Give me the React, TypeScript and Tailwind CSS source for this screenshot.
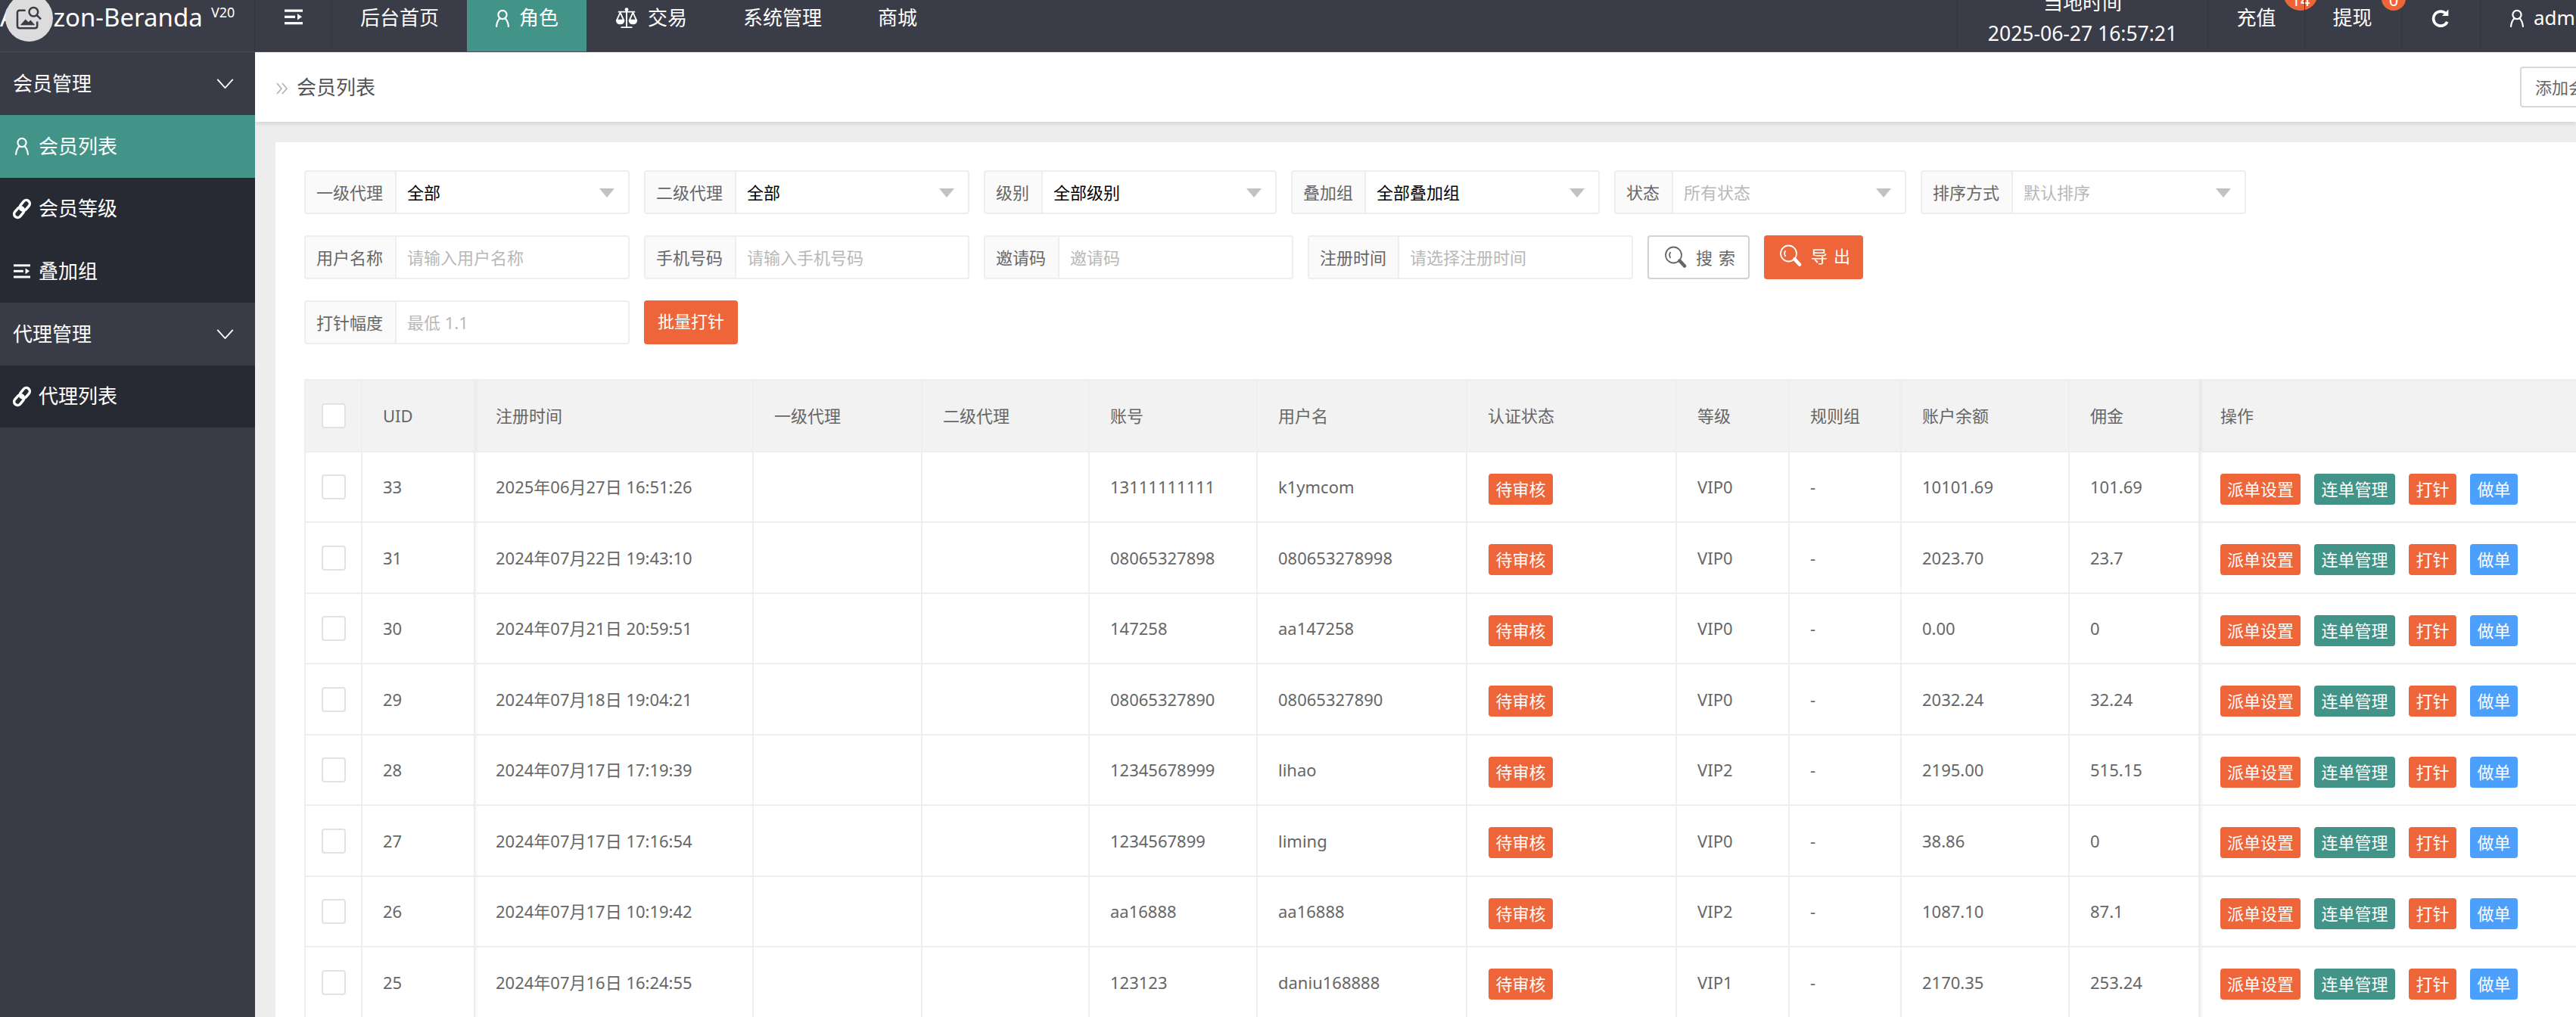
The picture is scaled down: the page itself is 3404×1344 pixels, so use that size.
import type { ReactNode } from "react";

const rows = [
  ["33", "2025年06月27日 16:51:26", "13111111111", "k1ymcom", "VIP0", "10101.69", "101.69"],
  ["31", "2024年07月22日 19:43:10", "08065327898", "080653278998", "VIP0", "2023.70", "23.7"],
  ["30", "2024年07月21日 20:59:51", "147258", "aa147258", "VIP0", "0.00", "0"],
  ["29", "2024年07月18日 19:04:21", "08065327890", "08065327890", "VIP0", "2032.24", "32.24"],
  ["28", "2024年07月17日 17:19:39", "12345678999", "lihao", "VIP2", "2195.00", "515.15"],
  ["27", "2024年07月17日 17:16:54", "1234567899", "liming", "VIP0", "38.86", "0"],
  ["26", "2024年07月17日 10:19:42", "aa16888", "aa16888", "VIP2", "1087.10", "87.1"],
  ["25", "2024年07月16日 16:24:55", "123123", "daniu168888", "VIP1", "2170.35", "253.24"],
];

const headers = ["UID", "注册时间", "一级代理", "二级代理", "账号", "用户名", "认证状态", "等级", "规则组", "账户余额", "佣金", "操作"];
const widths = [75, 149, 368, 223, 221, 222, 277, 277, 149, 148, 222, 172, 600];

function PersonIcon({ className }: { className?: string }) {
  return (
    <svg viewBox="0 0 20 24" fill="none" stroke="currentColor" strokeWidth="2.2" className={className}>
      <circle cx="10" cy="7.5" r="5.6" />
      <path d="M6.6 12 C4 14.5 2.6 18 2 23 M13.4 12 C16 14.5 17.4 18 18 23" strokeLinecap="round" />
    </svg>
  );
}

function LinkIcon({ className }: { className?: string }) {
  return (
    <svg viewBox="0 0 24 24" fill="none" stroke="currentColor" strokeWidth="3.2" className={className}>
      <rect x="11" y="0.5" width="8.5" height="14" rx="4.2" transform="rotate(40 15 8)" />
      <rect x="4.5" y="9.5" width="8.5" height="14" rx="4.2" transform="rotate(40 9 16)" />
    </svg>
  );
}

function ShrinkIcon({ className }: { className?: string }) {
  return (
    <svg viewBox="0 0 24 20" fill="currentColor" className={className}>
      <rect x="0" y="0" width="24" height="3.2" />
      <rect x="0" y="8.2" width="14" height="3.2" />
      <path d="M17 5.6 L23 9.8 L17 14 Z" />
      <rect x="0" y="16.6" width="24" height="3.2" />
    </svg>
  );
}

function ScaleIcon({ className }: { className?: string }) {
  return (
    <svg viewBox="0 0 32 30" fill="none" stroke="currentColor" strokeWidth="2" className={className}>
      <path d="M16 3 V28 M8 28 H24 M4 6 H28" />
      <path d="M7 7 L2 18 H12 Z M25 7 L20 18 H30 Z" strokeLinejoin="round" />
      <path d="M2 19 C3 24 11 24 12 19 Z M20 19 C21 24 29 24 30 19 Z" fill="currentColor" />
      <circle cx="16" cy="3" r="1.6" fill="currentColor" />
    </svg>
  );
}

function RefreshIcon({ className }: { className?: string }) {
  return (
    <svg viewBox="0 0 24 24" fill="none" stroke="currentColor" strokeWidth="3.6" className={className}>
      <path d="M19 7.5 A9.2 9.2 0 1 0 20 17" />
      <path d="M21.5 1.5 V9.5 H13.5 Z" fill="currentColor" stroke="none" />
    </svg>
  );
}

function SearchIcon({ className }: { className?: string }) {
  return (
    <svg viewBox="0 0 30 30" fill="none" stroke="currentColor" strokeWidth="1.8" className={className}>
      <circle cx="12.5" cy="12" r="10.5" />
      <path d="M8.5 8 C6.8 10.5 6.8 13.5 8.5 16" />
      <path d="M20.5 19.5 L27 26.5" strokeWidth="4.6" strokeLinecap="round" />
    </svg>
  );
}

function Caret() {
  return <span className="absolute right-[18px] top-[22px] h-0 w-0 border-x-[10px] border-t-[12px] border-x-transparent border-t-[#c2c2c2]" />;
}

function Field({
  label,
  labelWidth,
  width,
  value,
  placeholder,
  select,
}: {
  label: string;
  labelWidth: number;
  width: number;
  value?: string;
  placeholder?: string;
  select?: boolean;
}) {
  return (
    <div
      className="relative flex h-[58px] shrink-0 overflow-hidden rounded-[4px] border-2 border-[#eeeeee] bg-white text-[22px]"
      style={{ width }}
    >
      <div
        className="flex shrink-0 items-center border-r-2 border-[#eeeeee] bg-[#fafafa] pl-[14px] text-[#666666]"
        style={{ width: labelWidth }}
      >
        {label}
      </div>
      {value ? (
        <div className="flex items-center pl-[14px] text-black">{value}</div>
      ) : (
        <div className="flex items-center pl-[14px] text-[#b8b8b8]">{placeholder}</div>
      )}
      {select && <Caret />}
    </div>
  );
}

function SideGroup({ label }: { label: string }) {
  return (
    <div className="flex h-[83px] items-center justify-between bg-[#393b47] pl-[17px] pr-[28px] text-[26px] text-white">
      <span>{label}</span>
      <svg viewBox="0 0 24 14" fill="none" stroke="currentColor" strokeWidth="2" className="h-[13px] w-[23px]">
        <path d="M1 1 L12 13 L23 1" />
      </svg>
    </div>
  );
}

function SideItem({ label, icon, active }: { label: string; icon: ReactNode; active?: boolean }) {
  return (
    <div className={`flex h-[82.5px] items-center gap-[11px] pl-[18px] text-[26px] text-white ${active ? "bg-[#429488]" : "bg-[#282a33]"}`}>
      <span className="flex w-[22px] justify-center">{icon}</span>
      <span>{label}</span>
    </div>
  );
}

function TopItem({ label, icon, active }: { label: string; icon?: ReactNode; active?: boolean }) {
  return (
    <div className={`flex h-[68px] items-start gap-[12px] px-[37px] pt-[5px] leading-[36px] ${active ? "bg-[#429488]" : ""}`}>
      {icon}
      <span>{label}</span>
    </div>
  );
}

function ActionBtn({ label, color, width }: { label: string; color: string; width: number }) {
  return (
    <span className={`flex h-[41px] items-center justify-center rounded-[4px] text-[22px] text-white ${color}`} style={{ width }}>
      {label}
    </span>
  );
}

function CheckBox() {
  return <div className="mx-auto h-[33px] w-[32px] rounded-[4px] border-2 border-[#e2e2e2] bg-white" />;
}

export default function App() {
  return (
    <div className="relative flex h-[1344px] w-[3404px] flex-col overflow-hidden bg-[#ededed] font-['Noto_Sans','Noto_Sans_CJK_SC',sans-serif]">
      <header className="flex h-[69px] shrink-0 border-b border-[#4d4f5a] bg-[#3a3c48] text-[26px] text-white">
        <div className="relative w-[337px] shrink-0 overflow-hidden border-r border-[#33353f] leading-[46px]">
          <span className="absolute left-0 top-0 whitespace-nowrap text-[33px]">Amazon-Beranda</span>
          <span className="absolute left-[279px] top-[-7px] text-[18px]">V20</span>
        </div>
        <div className="flex h-[68px] w-[102px] shrink-0 items-start justify-center border-r border-[#33353f] pt-[12px]">
          <ShrinkIcon className="h-[21px] w-[24px]" />
        </div>
        <TopItem label="后台首页" />
        <TopItem active label="角色" icon={<PersonIcon className="mt-[6px] h-[26px] w-[20px]" />} />
        <TopItem label="交易" icon={<ScaleIcon className="mt-[5px] h-[28px] w-[32px]" />} />
        <TopItem label="系统管理" />
        <TopItem label="商城" />
        <div className="ml-auto flex h-[68px] w-[331px] shrink-0 flex-col items-center border-l border-[#33353f] text-center">
          <div className="mt-[-16px] leading-[38px]">当地时间</div>
          <div className="mt-[3px] text-[26.5px] leading-[38px]">2025-06-27 16:57:21</div>
        </div>
        <div className="relative flex h-[68px] w-[128px] shrink-0 justify-center border-l border-[#33353f] pt-[5px] leading-[36px]">
          充值
          <span className="absolute left-[99px] top-[-32px] flex h-[46px] w-[46px] items-end justify-center rounded-full bg-[#ee6539] text-[22px] leading-[30px]">14</span>
        </div>
        <div className="relative flex h-[68px] w-[128px] shrink-0 justify-center border-l border-[#33353f] pr-[2px] pt-[5px] leading-[36px]">
          提现
          <span className="absolute left-[101px] top-[-18px] flex h-[32px] w-[32px] items-end justify-center rounded-full bg-[#ee6539] text-[22px] leading-[30px]">0</span>
        </div>
        <div className="flex h-[68px] w-[104px] shrink-0 justify-center border-l border-[#33353f] pt-[11px]">
          <RefreshIcon className="h-[25px] w-[25px]" />
        </div>
        <div className="flex h-[68px] w-[127px] shrink-0 items-start gap-[12px] overflow-hidden border-l border-[#33353f] pl-[38px] pt-[5px] leading-[36px]">
          <PersonIcon className="mt-[6px] h-[26px] w-[20px] shrink-0" />
          <span>admin</span>
        </div>
      </header>

      {/* grey circle of the browser's image search button, over the logo */}
      <div className="absolute left-[7px] top-[-8px] flex h-[63px] w-[63px] items-center justify-center rounded-full bg-[#dcdcdc] pt-[2px]">
        <svg viewBox="0 0 36 36" fill="none" className="h-[35px] w-[35px] text-[#3a3c48]">
          <path d="M13 7 H5 Q2 7 2 10 V28 Q2 31 5 31 H26 Q29 31 29 28 V22" stroke="currentColor" strokeWidth="2.6" />
          <path d="M6 27 L13 19 L17 23 L20 20 L26 27 Z" fill="currentColor" />
          <circle cx="24" cy="9" r="6" stroke="currentColor" strokeWidth="2.6" />
          <path d="M28.5 13.5 L34 19" stroke="currentColor" strokeWidth="2.6" />
        </svg>
      </div>

      <div className="flex min-h-0 flex-1">
        <aside className="w-[337px] shrink-0 bg-[#393b47]">
          <SideGroup label="会员管理" />
          <SideItem active label="会员列表" icon={<PersonIcon className="h-[26px] w-[20px]" />} />
          <SideItem label="会员等级" icon={<LinkIcon className="h-[28px] w-[26px] shrink-0" />} />
          <SideItem label="叠加组" icon={<ShrinkIcon className="h-[21px] w-[24px]" />} />
          <SideGroup label="代理管理" />
          <SideItem label="代理列表" icon={<LinkIcon className="h-[28px] w-[26px] shrink-0" />} />
        </aside>

        <main className="min-w-0 flex-1 overflow-hidden">
          <div className="flex h-[92px] items-center justify-between bg-white pl-[28px] shadow-[0_2px_6px_rgba(0,0,0,0.12)]">
            <div className="flex items-center gap-[11px]">
              <svg viewBox="0 0 16 18" fill="none" stroke="#b0b0b0" strokeWidth="1.6" className="mt-[4px] h-[18px] w-[16px]">
                <path d="M1 2 L7 9 L1 16 M8 2 L14 9 L8 16" />
              </svg>
              <span className="text-[26px] text-[#555555]">会员列表</span>
            </div>
            <div className="flex h-[54px] w-[74px] items-center overflow-hidden whitespace-nowrap rounded-l-[4px] border-2 border-r-0 border-[#d9d9d9] pl-[18px] text-[22px] text-[#666666]">
              添加会员
            </div>
          </div>

          <div className="ml-[27px] mt-[27px] bg-white pl-[38px] pt-[37px]">
            <div className="flex gap-[19px]">
              <Field select label="一级代理" labelWidth={120} width={430} value="全部" />
              <Field select label="二级代理" labelWidth={120} width={430} value="全部" />
              <Field select label="级别" labelWidth={76} width={387} value="全部级别" />
              <Field select label="叠加组" labelWidth={97} width={408} value="全部叠加组" />
              <Field select label="状态" labelWidth={76} width={386} placeholder="所有状态" />
              <Field select label="排序方式" labelWidth={120} width={430} placeholder="默认排序" />
            </div>

            <div className="mt-[28px] flex gap-[19px]">
              <Field label="用户名称" labelWidth={120} width={430} placeholder="请输入用户名称" />
              <Field label="手机号码" labelWidth={120} width={430} placeholder="请输入手机号码" />
              <Field label="邀请码" labelWidth={98} width={409} placeholder="邀请码" />
              <Field label="注册时间" labelWidth={119} width={430} placeholder="请选择注册时间" />
              <button className="flex h-[58px] w-[135px] items-center gap-[12px] rounded-[4px] border-2 border-[#d2d2d2] bg-white pl-[20px] text-[22px] text-[#666666]">
                <SearchIcon className="h-[30px] w-[30px]" />
                <span className="tracking-[8px]">搜索</span>
              </button>
              <button className="flex h-[58px] w-[131px] items-center gap-[12px] rounded-[4px] bg-[#ee6539] pb-[4px] pl-[20px] text-[22px] text-white">
                <SearchIcon className="h-[30px] w-[30px]" />
                <span className="tracking-[8px]">导出</span>
              </button>
            </div>

            <div className="mt-[28px] flex gap-[19px]">
              <Field label="打针幅度" labelWidth={120} width={430} placeholder="最低 1.1" />
              <button className="h-[58px] w-[124px] rounded-[4px] bg-[#ee6539] pb-[4px] text-[22px] text-white">批量打针</button>
            </div>

            <table className="mt-[46px] w-[3103px] table-fixed border-collapse text-[22px] text-[#666666]">
              <colgroup>
                {widths.map((w, i) => (
                  <col key={i} style={{ width: w }} />
                ))}
              </colgroup>
              <thead>
                <tr className="h-[95px] bg-[#f2f2f2]">
                  <th className="border-2 border-[#eeeeee]">
                    <CheckBox />
                  </th>
                  {headers.map((h, i) => (
                    <th
                      key={h}
                      className={`border-2 border-[#eeeeee] pl-[27px] text-left font-normal ${i === 1 ? "shadow-[inset_4px_0_4px_-3px_rgba(0,0,0,0.06)]" : ""} ${i === 11 ? "shadow-[inset_4px_0_4px_-3px_rgba(0,0,0,0.1)]" : ""}`}
                      colSpan={i === 11 ? 2 : 1}
                    >
                      {h}
                    </th>
                  ))}
                </tr>
              </thead>
              <tbody>
                {rows.map((r, idx) => (
                  <tr key={r[0]} className={idx % 2 === 0 ? "h-[93px]" : "h-[94px]"}>
                    <td className="border-2 border-[#eeeeee]">
                      <CheckBox />
                    </td>
                    <td className="border-2 border-[#eeeeee] pl-[27px]">{r[0]}</td>
                    <td className="border-2 border-[#eeeeee] pl-[27px] shadow-[inset_4px_0_4px_-3px_rgba(0,0,0,0.06)]">{r[1]}</td>
                    <td className="border-2 border-[#eeeeee]" />
                    <td className="border-2 border-[#eeeeee]" />
                    <td className="border-2 border-[#eeeeee] pl-[27px]">{r[2]}</td>
                    <td className="border-2 border-[#eeeeee] pl-[27px]">{r[3]}</td>
                    <td className="border-2 border-[#eeeeee] pl-[28px]">
                      <span className="mt-[5px] flex h-[41px] w-[85px] items-center justify-center rounded-[4px] bg-[#ee6539] text-[22px] text-white">待审核</span>
                    </td>
                    <td className="border-2 border-[#eeeeee] pl-[27px]">{r[4]}</td>
                    <td className="border-2 border-[#eeeeee] pl-[27px]">-</td>
                    <td className="border-2 border-[#eeeeee] pl-[27px]">{r[5]}</td>
                    <td className="border-2 border-[#eeeeee] pl-[27px]">{r[6]}</td>
                    <td colSpan={2} className="border-2 border-[#eeeeee] pl-[27px] shadow-[inset_4px_0_4px_-3px_rgba(0,0,0,0.1)]">
                      <div className="mt-[5px] flex gap-[18px]">
                        <ActionBtn label="派单设置" color="bg-[#ee6539]" width={106} />
                        <ActionBtn label="连单管理" color="bg-[#429488]" width={107} />
                        <ActionBtn label="打针" color="bg-[#ee6539]" width={63} />
                        <ActionBtn label="做单" color="bg-[#4c9ffb]" width={63} />
                      </div>
                    </td>
                  </tr>
                ))}
              </tbody>
            </table>
          </div>
        </main>
      </div>
    </div>
  );
}
